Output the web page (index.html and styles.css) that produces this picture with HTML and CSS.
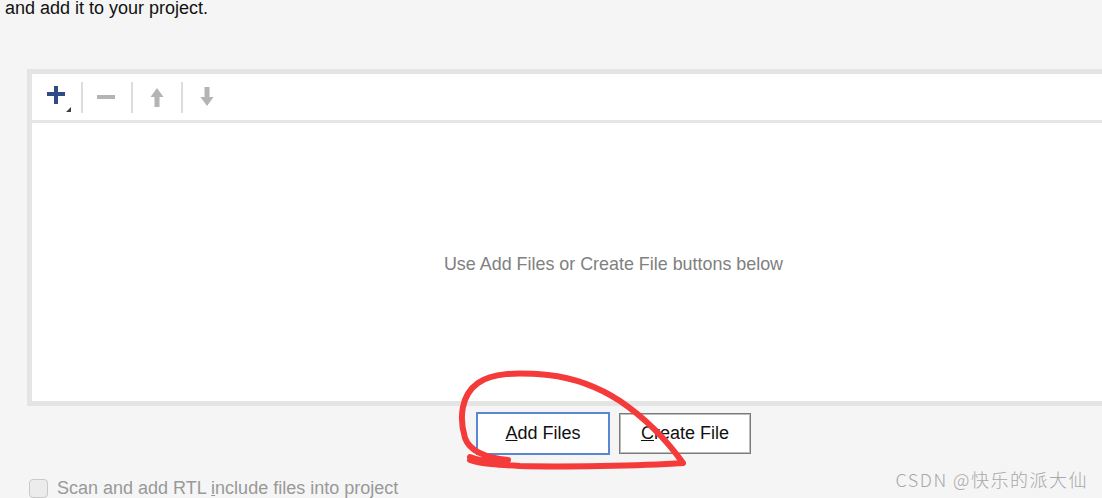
FILE: index.html
```html
<!DOCTYPE html>
<html>
<head>
<meta charset="utf-8">
<link rel="stylesheet" href="styles.css">
</head>
<body>
<div class="page">
  <p class="intro">and add it to your project.</p>
  <div class="panel">
    <div class="toolbar">
      <div class="tbtn">
        <svg width="26" height="28" viewBox="0 0 26 28">
          <rect x="1" y="6" width="18" height="4" fill="#2f4b85"/>
          <rect x="8" y="-2" width="4" height="20" fill="#2f4b85"/>
          <polygon points="25,21 25,26 20,26" fill="#404040"/>
        </svg>
      </div>
      <div class="tsep"></div>
      <div class="tbtn">
        <svg width="20" height="20" viewBox="0 0 20 20"><rect x="0" y="8" width="18" height="4" fill="#b4b4b4"/></svg>
      </div>
      <div class="tsep"></div>
      <div class="tbtn">
        <svg width="20" height="20" viewBox="0 0 20 20"><polygon points="3.5,10 10,1 16.5,10 12.5,10 12.5,20 7.5,20 7.5,10" fill="#b4b4b4"/></svg>
      </div>
      <div class="tsep"></div>
      <div class="tbtn">
        <svg width="20" height="20" viewBox="0 0 20 20"><polygon points="7.5,0 12.5,0 12.5,10 16.5,10 10,19 3.5,10 7.5,10" fill="#b4b4b4"/></svg>
      </div>
    </div>
    <div class="content">
      <span class="hint">Use Add Files or Create File buttons below</span>
    </div>
  </div>
  <div class="buttons">
    <button class="btn primary"><u>A</u>dd Files</button>
    <button class="btn"><u>C</u>reate File</button>
  </div>
  <label class="check">
    <span class="box"></span>
    <span class="label">Scan and add RTL <u>i</u>nclude files into project</span>
  </label>
</div>
<div class="watermark">CSDN @快乐的派大仙</div>
<svg class="scribble" width="1102" height="498" viewBox="0 0 1102 498">
  <path d="M 470 457 C 480 461, 495 462, 508 460 M 508 460 C 488 458, 470 452, 465 438 C 459 418, 461 395, 478 383 C 492 373, 515 372, 548 375 C 575 378, 600 388, 620 401 C 645 418, 668 442, 683 463 C 640 466, 560 467, 520 466 C 500 465, 480 464, 470 460"
        fill="none" stroke="#f53a3a" stroke-width="6" stroke-linecap="round" stroke-linejoin="round"/>
</svg>
</body>
</html>
```

FILE: styles.css
```css
html, body {
  margin: 0;
  padding: 0;
}
body {
  background: #f5f5f5;
  width: 1102px;
  height: 498px;
  overflow: hidden;
  position: relative;
  font-family: "Liberation Sans", Arial, sans-serif;
}
.page {
  display: flex;
  flex-direction: column;
  width: 1102px;
  overflow: hidden;
}
.intro {
  margin: -2px 0 0 5px;
  font-size: 18px;
  color: #111;
  line-height: 20px;
}
.panel {
  margin-top: 51px;
  margin-left: 27px;
  width: 1173px;
  flex: none;
  height: 337px;
  box-sizing: border-box;
  border: 5px solid #e4e4e4;
  background: #fff;
  display: flex;
  flex-direction: column;
}
.toolbar {
  height: 46px;
  border-bottom: 3px solid #e6e6e6;
  display: flex;
  align-items: center;
  padding-left: 1px;
}
.tbtn {
  width: 48px;
  height: 46px;
  display: flex;
  align-items: center;
  justify-content: center;
}
.tbtn:first-child svg {
  margin-left: 4px;
  margin-top: 6px;
}
.tsep {
  width: 2px;
  height: 31px;
  background: #dcdcdc;
}
.content {
  flex: 1;
  display: flex;
  align-items: center;
  justify-content: center;
  padding-top: 5px;
}
.hint {
  font-size: 17.9px;
  color: #808080;
}
.buttons {
  display: flex;
  align-items: center;
  justify-content: center;
  gap: 9px;
  margin-top: 6px;
  margin-left: 27px;
  width: 1173px;
  flex: none;
}
.btn {
  font-family: "Liberation Sans", Arial, sans-serif;
  font-size: 18px;
  color: #111;
  background: #fff;
  height: 41px;
  width: 132px;
  border: 1px solid #7a7a7a;
  box-shadow: inset 0 0 0 1px #bdbdbd;
  padding: 0;
}
.btn.primary {
  height: 43px;
  width: 134px;
  border: 2px solid #5b87d2;
  box-shadow: none;
}
.check {
  display: flex;
  align-items: center;
  gap: 9px;
  margin-top: 23px;
  margin-left: 29px;
}
.box {
  width: 17px;
  height: 17px;
  border: 1px solid #c9c9c9;
  border-radius: 4px;
  background: #ececec;
}
.label {
  font-size: 18px;
  color: #999;
}
.watermark {
  position: absolute;
  right: 14px;
  bottom: 6px;
  font-family: "Noto Sans CJK SC", sans-serif;
  font-size: 18px;
  letter-spacing: 1.5px;
  color: #a8a8a8;
  font-weight: 300;
}
.scribble {
  position: absolute;
  left: 0;
  top: 0;
  pointer-events: none;
}
```
